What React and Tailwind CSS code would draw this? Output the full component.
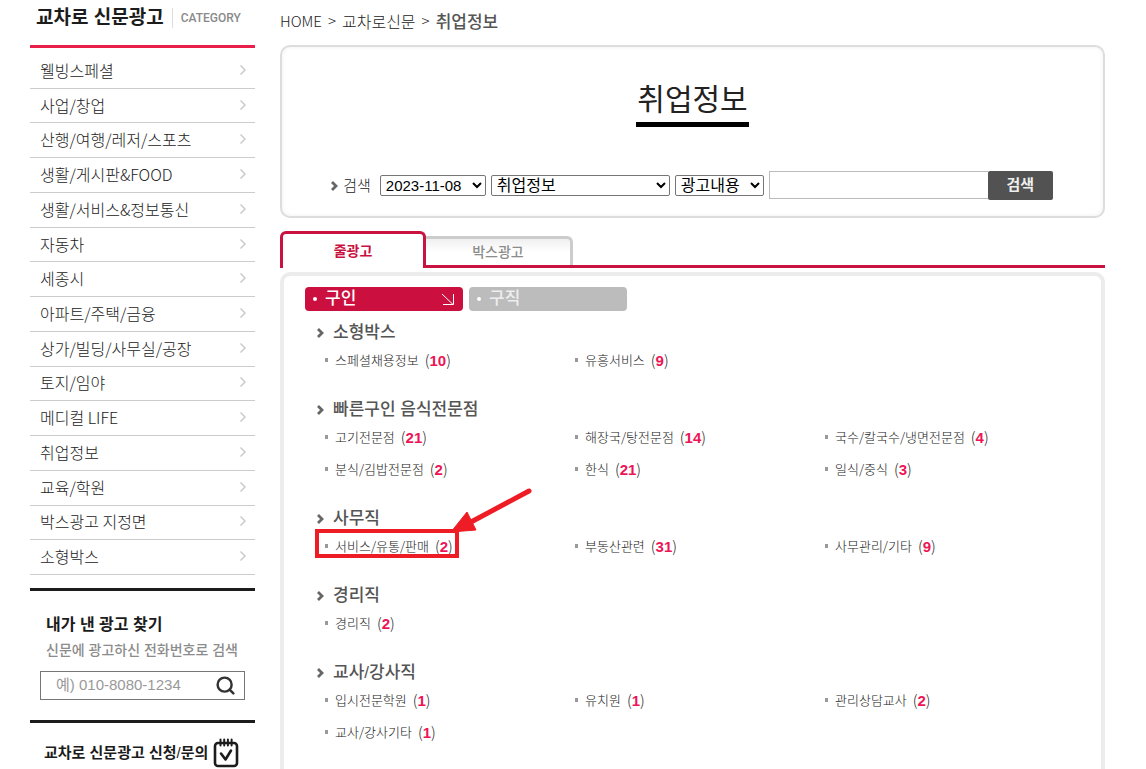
import { useState } from 'react';
import { ChevronRight, Search } from 'lucide-react';

const categories = [
  '웰빙스페셜', '사업/창업', '산행/여행/레저/스포츠', '생활/게시판&FOOD', '생활/서비스&정보통신',
  '자동차', '세종시', '아파트/주택/금융', '상가/빌딩/사무실/공장', '토지/임야',
  '메디컬 LIFE', '취업정보', '교육/학원', '박스광고 지정면', '소형박스',
];

const sections = [
  { title: '소형박스', items: [['스페셜채용정보', 10], ['유흥서비스', 9]] },
  {
    title: '빠른구인 음식전문점',
    items: [
      ['고기전문점', 21], ['해장국/탕전문점', 14], ['국수/칼국수/냉면전문점', 4],
      ['분식/김밥전문점', 2], ['한식', 21], ['일식/중식', 3],
    ],
  },
  { title: '사무직', items: [['서비스/유통/판매', 2, true], ['부동산관련', 31], ['사무관리/기타', 9]] },
  { title: '경리직', items: [['경리직', 2]] },
  { title: '교사/강사직', items: [['입시전문학원', 1], ['유치원', 1], ['관리상담교사', 2], ['교사/강사기타', 1]] },
];

function Arrow() {
  return (
    <svg width="7" height="10" viewBox="0 0 7 10" fill="none" stroke="#666" strokeWidth="2.8" className="shrink-0" aria-hidden="true">
      <path d="M1 1l4 4-4 4" />
    </svg>
  );
}

function Marker() {
  return (
    <svg width="218" height="72" viewBox="0 0 218 72" className="absolute -left-[11px] -top-[42px] pointer-events-none" aria-hidden="true">
      <rect x="3" y="43" width="140" height="25" fill="none" stroke="#ee1c25" strokeWidth="4" />
      <path d="M215 3L157 34" stroke="#ee1c25" strokeWidth="5" strokeLinecap="round" />
      <path d="M137 44L153 24L162 42Z" fill="#ee1c25" stroke="#ee1c25" strokeLinejoin="round" />
    </svg>
  );
}

function Sidebar() {
  return (
    <aside className="w-[225px] shrink-0 text-[#1c1c1c]">
      <div className="h-[45px] pl-1.5 pt-1 flex items-start">
        <h2 className="text-[19px] leading-7 font-bold">교차로 신문광고</h2>
        <span className="ml-2 mt-1 h-5 border-l border-[#ddd]" />
        <span className="ml-2 font-[Roboto] text-xs leading-7 font-medium text-[#8a8a8a]">CATEGORY</span>
      </div>
      <ul className="h-[530px] pt-[6px] flex flex-col border-t-3 border-[#e9204a]">
        {categories.map((name) => (
          <li key={name} className="flex-1 border-b border-[#ccc]">
            <a href="#" className="h-full pl-[10px] pr-1 pb-0.5 flex items-center justify-between font-['Noto_Sans_CJK_KR',sans-serif] text-base leading-6 font-light text-[#222]">
              {name}
              <ChevronRight size={16} strokeWidth={2.5} className="text-[#ccc]" />
            </a>
          </li>
        ))}
      </ul>

      <form className="mt-[13px] pt-[22px] px-[10px] pb-5 border-y-3 border-[#1c1c1c]" onSubmit={(e) => e.preventDefault()}>
        <label htmlFor="phone" className="block pl-[6px]">
          <span className="block text-base leading-6 font-bold">내가 낸 광고 찾기</span>
          <span className="block text-sm leading-[26px] font-medium text-[#8c8c8c]">신문에 광고하신 전화번호로 검색</span>
        </label>
        <div className="mt-2 h-[29px] flex items-center border border-[#767676]">
          <input id="phone" type="text" placeholder="예) 010-8080-1234" className="min-w-0 flex-1 pl-[15px] text-[15px] outline-none placeholder:text-[#999]" />
          <button type="submit" aria-label="검색" className="mr-2 text-[#333]">
            <Search size={21} strokeWidth={2.8} />
          </button>
        </div>
      </form>

      <a href="#" className="mt-[14px] pl-[14px] flex items-center gap-[5px] text-[15px] leading-8 font-bold">
        <span>교차로 신문광고 신청<span className="font-light">/</span>문의</span>
        <svg width="26" height="30" viewBox="0 0 26 30" fill="none" stroke="#1c1c1c" strokeWidth="2.6" strokeLinecap="round" strokeLinejoin="round" aria-hidden="true">
          <rect x="2" y="5" width="22" height="23" rx="3" />
          <path d="M7.500 1.500v6M11.200 1.500v6M14.900 1.500v6M18.600 1.500v6" strokeWidth="2" />
          <path d="M8 15.500l4.500 6 5.500-9" />
        </svg>
      </a>
    </aside>
  );
}

function SearchBox() {
  const select = 'h-[21px] pl-px border border-[#767676] rounded-[2px] bg-white text-black';
  return (
    <form className="h-[173px] rounded-[10px] border-2 border-[#ddd] shadow-[inset_0_0_4px_#eee] flex flex-col items-center" onSubmit={(e) => e.preventDefault()}>
      <h1 className="mt-[30px] h-[50px] px-px border-b-5 border-black text-[30px] leading-[46px] text-[#222]">취업정보</h1>
      <div className="mt-11 pr-px flex items-center gap-[5px] whitespace-nowrap">
        <Arrow />
        <label htmlFor="keyword" className="mr-1 text-[15px] leading-6 font-light text-[#222]">검색</label>
        <select aria-label="날짜" className={`${select} w-[106px] text-[15px]`}>
          <option>2023-11-08</option>
        </select>
        <select aria-label="분류" className={`${select} w-[179px] text-base leading-none`}>
          <option>취업정보</option>
        </select>
        <select aria-label="검색 대상" className={`${select} w-[89px] text-base leading-none`}>
          <option>광고내용</option>
        </select>
        <div className="flex">
          <input id="keyword" type="text" className="w-[219px] h-7 px-2 border border-r-0 border-[#bbb] outline-none" />
          <button type="submit" className="w-[65px] h-[29px] rounded-[2px] bg-[#525252] text-[15px] font-bold text-[#eee]">검색</button>
        </div>
      </div>
    </form>
  );
}

export default function App() {
  const [hiring, setHiring] = useState(true);

  return (
    <div className="h-screen overflow-hidden flex gap-[25px] pl-[30px] pr-[41px] bg-white font-['Liberation_Sans','Noto_Sans_CJK_KR',sans-serif]">
      <Sidebar />

      <main className="flex-1 min-w-0">
        <nav className="h-[45px] pt-[9px] flex gap-[6px] font-['Noto_Sans_CJK_KR',sans-serif] text-[15px] leading-6 font-light text-[#222]">
          <a href="#">HOME</a>
          <span>&gt;</span>
          <a href="#" className="text-base leading-6">교차로신문</a>
          <span>&gt;</span>
          <a href="#" className="text-[17px] leading-6 font-medium text-[#555]">취업정보</a>
        </nav>

        <SearchBox />

        {/* Tabs */}
        <div className="mt-[13px] flex items-end text-sm">
          <button type="button" className="w-[146px] h-[37px] border-3 border-b-0 border-[#c9123f] rounded-t-md font-bold text-[#c9123f]">줄광고</button>
          <div className="flex-1 border-b-3 border-[#c9123f]">
            <button type="button" className="block w-[147px] h-[29px] border-3 border-l-0 border-b-0 border-[#ccc] rounded-tr-md bg-linear-to-b from-[#f0f0f0] to-white to-50% font-medium text-[#8c8c8c]">박스광고</button>
          </div>
        </div>

        <div className="mt-1 min-h-screen border-4 border-[#ececec] rounded-[10px] pt-[11px]">
          <div className="pl-[21px] flex gap-[6px] text-[17px] leading-6 font-medium text-white">
            <button type="button" onClick={() => setHiring(true)} className="w-[158px] h-6 px-2 flex items-center rounded bg-[#cb103f]">
              <span className="w-1 h-1 mr-2 rounded-full bg-white" />
              구인
              {hiring && (
                <svg width="14" height="14" viewBox="0 0 14 14" fill="none" stroke="#fff" className="ml-auto" aria-hidden="true">
                  <path d="M1 2l11 10.500M12.500 2v10.500H2" />
                </svg>
              )}
            </button>
            <button type="button" onClick={() => setHiring(false)} className="w-[158px] h-6 px-2 flex items-center rounded bg-[#bcbcbc] text-[#eee]">
              <span className="w-1 h-1 mr-2 rounded-full bg-white" />
              구직
            </button>
          </div>

          <div className="mt-[11px] flex flex-col gap-[23px] text-[#222]">
            {sections.map((section) => (
              <section key={section.title}>
                <h3 className="pl-[33px] flex items-center gap-[9px] text-[17px] leading-[22px] font-medium text-[#555]">
                  <Arrow />
                  {section.title}
                </h3>
                <ul className="pl-[41px] pr-[26px] grid grid-cols-3">
                  {section.items.map(([name, count, marked]) => (
                    <li key={name} className="relative h-8 flex items-center">
                      <span className="w-[3px] h-1 mr-[7px] bg-[#999]" />
                      <a href="#" className="flex items-center gap-[6px] font-['Noto_Sans_CJK_KR',sans-serif] text-[13px] leading-6 font-light">
                        {name}
                        <span className="text-[15px] leading-6">(<b className="font-['Liberation_Sans'] font-bold text-[#ed1556]">{count}</b>)</span>
                      </a>
                      {marked && <Marker />}
                    </li>
                  ))}
                </ul>
              </section>
            ))}
          </div>
        </div>
      </main>
    </div>
  );
}
